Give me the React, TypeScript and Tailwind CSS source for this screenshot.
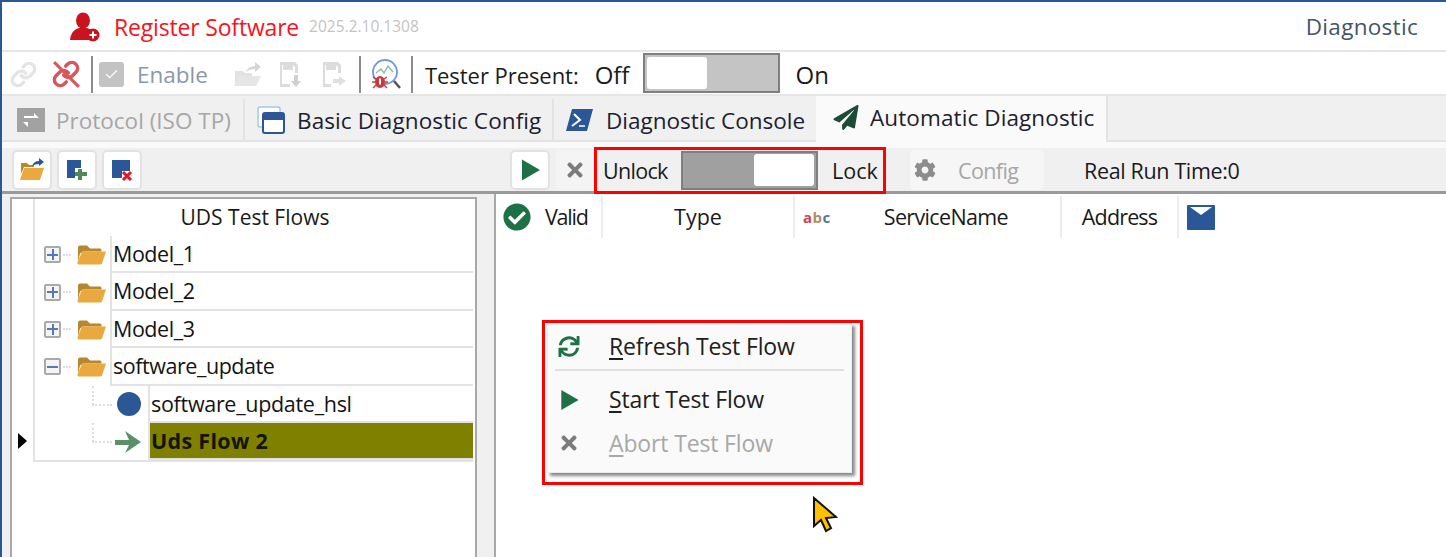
import { Link, Check } from "lucide-react";
import { FaCheckCircle, FaCog, FaPaperPlane, FaSync, FaTimes } from "react-icons/fa";

function FolderIcon({ className = "" }: { className?: string }) {
  return (
    <svg viewBox="0 0 30 20" className={className}>
      <path d="M2 3 Q2 1 4 1 H11 L14 4 H24 Q25.500 4 25.500 6 V7 H7 L4 9 L2 17Z" fill="#b8862f" />
      <path d="M6 7 H30 L26 19 Q25.500 20 24 20 H3 Q1 20 1.500 18Z" fill="#eaa93f" />
    </svg>
  );
}

function PlayIcon({ className = "" }: { className?: string }) {
  return (
    <svg viewBox="0 0 20 22" className={className}>
      <path d="M1 0 L20 11 L1 22Z" fill="#1e7145" />
    </svg>
  );
}

function Expander({ open = false }: { open?: boolean }) {
  return (
    <div className="relative flex h-[17px] w-[17px] items-center justify-center rounded-[2px] border-2 border-[#a9a9a9] bg-[#f4f4f4]">
      <div className="h-[2px] w-[11px] bg-[#5a78b8]" />
      {!open && <div className="absolute h-[11px] w-[2px] bg-[#5a78b8]" />}
    </div>
  );
}

function FolderRow({ label, open = false }: { label: string; open?: boolean }) {
  return (
    <div className="flex h-[37.400px] items-stretch">
      <div className="relative flex w-[75px] shrink-0 items-center pl-[9px]">
        <Expander open={open} />
        <div className="ml-[2px] w-[8px] border-t-2 border-dotted border-[#dddddd]" />
        <FolderIcon className="ml-[5px] h-[21px] w-[30px]" />
      </div>
      <div className="flex flex-1 items-center border-b-2 border-l-2 border-[#e3e3e3] pl-[1px] text-[21.500px] leading-none tracking-[-0.45px] text-[#141414]">
        {label}
      </div>
    </div>
  );
}

function ChildRow({ label, selected = false, icon }: { label: string; selected?: boolean; icon: React.ReactNode }) {
  return (
    <div className="flex h-[37.400px] items-stretch">
      <div className="relative flex w-[113px] shrink-0 items-center justify-end pr-[7px]">
        <div className="absolute left-[57px] top-0 h-[19px] border-l-2 border-dotted border-[#dddddd]" />
        <div className="absolute left-[57px] top-[18px] w-[20px] border-t-2 border-dotted border-[#dddddd]" />
        {icon}
      </div>
      <div
        className={`flex flex-1 items-center border-b-2 border-l-2 border-[#e3e3e3] pl-[1px] text-[21.500px] leading-none ${
          selected ? "bg-[#808000] font-bold tracking-[0.3px] text-[#141400]" : "tracking-[-0.3px] text-[#141414]"
        }`}
      >
        {label}
      </div>
    </div>
  );
}

function HeaderCell({ width, children, center = true }: { width: string; children: React.ReactNode; center?: boolean }) {
  return (
    <div
      className={`flex h-[42px] items-center border-r-2 border-[#ececec] text-[21.500px] leading-none text-[#1a1a1a] ${width} ${
        center ? "justify-center" : ""
      }`}
    >
      {children}
    </div>
  );
}

function MenuItem({ icon, first, rest, disabled = false, height }: { icon: React.ReactNode; first: string; rest: string; disabled?: boolean; height: string }) {
  return (
    <div className={`flex items-center ${height}`}>
      <div className="flex w-[61px] shrink-0 justify-center pr-[19px]">{icon}</div>
      <span className={`text-[23px] leading-none tracking-[-0.15px] ${disabled ? "text-[#a8a8a8]" : "text-[#202020]"}`}>
        <span className="underline underline-offset-[3px]">{first}</span>
        {rest}
      </span>
    </div>
  );
}

export default function App() {
  return (
    <div className="relative h-[557px] w-[1446px] overflow-hidden border-l-2 border-t-2 border-[#2b5797] bg-white font-['Open_Sans',sans-serif]">
      {/* title bar */}
      <div className="flex h-[50px] items-center border-b-2 border-[#e6e6e6] pl-[68px] pr-[28px] pt-[2px]">
        <svg viewBox="0 0 30 30" className="h-[30px] w-[30px] shrink-0">
          <ellipse cx="13" cy="8.500" rx="7" ry="8" fill="#c8141e" />
          <path d="M0 28 Q1 18 9 16 H17 Q21 17 22 19 Q17 23 19 28Z" fill="#c8141e" />
          <circle cx="23" cy="23" r="6.500" fill="#c8141e" />
          <path d="M19.500 23 H26.500 M23 19.500 V26.500" stroke="#fff" strokeWidth="2" />
        </svg>
        <span className="ml-[14px] text-[23px] leading-none tracking-[-0.18px] text-[#f5141e]">Register Software</span>
        <span className="ml-[10px] text-[15.500px] leading-none text-[#c4c4c4]">2025.2.10.1308</span>
        <span className="ml-auto text-[22.500px] leading-none tracking-[0.3px] text-[#44546a]">Diagnostic</span>
      </div>

      {/* device toolbar */}
      <div className="flex h-[44px] items-center border-b-2 border-[#e6e6e6] pl-[8px] pt-[2px]">
        <Link className="h-[27px] w-[27px] text-[#e4e4e4]" strokeWidth={3} />
        <div className="relative ml-[15px] h-[28px] w-[28px]">
          <Link className="h-[28px] w-[28px] text-[#d8555c]" strokeWidth={3} />
          <div className="absolute left-[13px] top-[-3px] h-[35px] w-[3px] -rotate-45 bg-[#d8555c]" />
        </div>
        <div className="ml-[11px] h-[37px] w-[2px] bg-[#8c8c8c]" />
        <div className="ml-[6px] flex h-[25px] w-[25px] items-center justify-center rounded-[3px] bg-[#c3c3c3]">
          <Check className="h-[15px] w-[15px] text-white" strokeWidth={2} />
        </div>
        <span className="ml-[13px] w-[72px] pt-[2px] text-[22.500px] leading-none text-[#8a98a8]">Enable</span>
        <svg viewBox="0 0 30 26" className="ml-[23px] h-[26px] w-[30px]">
          <path d="M3 10 H11 L13 12 H20 V15 H8 L3 24Z" fill="#e2e2e2" />
          <path d="M8 15 H29 L24 25 H2Z" fill="#e6e6e6" />
          <path d="M14 11 Q16 5 23 5 V1 L29 6 L23 11 V8 Q17 8 14 11Z" fill="#d6d6d6" />
        </svg>
        <svg viewBox="0 0 24 28" className="ml-[16px] h-[28px] w-[24px]">
          <path d="M2 2 H17 L20 5 V13 H17 V7 L15 5 V10 H5 V5 H4 V24 H12 V27 H2Z" fill="#dcdcdc" />
          <path d="M8 5 H12 V8 H8Z" fill="#dcdcdc" />
          <path d="M16 15 H20 V21 H23 L18 27 L13 21 H16Z" fill="#d0d0d0" />
        </svg>
        <svg viewBox="0 0 26 28" className="ml-[19px] h-[28px] w-[26px]">
          <path d="M2 2 H17 L20 5 V13 H17 V7 L15 5 V10 H5 V5 H4 V24 H10 V27 H2Z" fill="#dcdcdc" />
          <path d="M8 5 H12 V8 H8Z" fill="#dcdcdc" />
          <path d="M12 19 H18 V16 L25 21 L18 26 V23 H12Z" fill="#e0e0e0" />
        </svg>
        <div className="ml-[12px] h-[37px] w-[2px] bg-[#8c8c8c]" />
        <svg viewBox="0 0 32 32" className="ml-[9px] h-[32px] w-[32px]">
          <circle cx="15" cy="14" r="12" fill="none" stroke="#6f9bd0" strokeWidth="1.800" />
          <path d="M24 23 L30 30" stroke="#555" strokeWidth="2.500" />
          <path d="M6 15 L11 11 L14 15 L18 8 L23 14" fill="none" stroke="#8cc09a" strokeWidth="1.500" />
          <ellipse cx="10" cy="24" rx="5" ry="6" fill="#cc3540" />
          <path d="M3 19 L6 21 M17 19 L14 21 M2 24 H5 M18 24 H15 M3 30 L6 27 M17 30 L14 27" stroke="#cc3540" strokeWidth="1.400" />
          <rect x="9" y="20.500" width="2" height="6" fill="#fff" />
        </svg>
        <div className="ml-[9px] h-[37px] w-[2px] bg-[#8c8c8c]" />
        <span className="ml-[12px] pt-[2px] text-[22px] leading-none tracking-[-0.05px] text-[#1a1a1a]">Tester Present:</span>
        <span className="ml-[16px] pt-[2px] text-[24px] leading-none text-[#1a1a1a]">Off</span>
        <div className="mb-[2px] ml-[14px] flex h-[40px] w-[137px] items-center border-2 border-[#7f7f7f] bg-[#c4c4c4] pl-[2px]">
          <div className="h-[32px] w-[60px] rounded-[3px] bg-white" />
        </div>
        <span className="ml-[15px] pt-[2px] text-[24px] leading-none text-[#1a1a1a]">On</span>
      </div>

      {/* tabs */}
      <div className="flex h-[46px] items-end border-b-2 border-[#e3e3e3] bg-[#f0f0f0] pl-[3px]">
        <div className="flex h-[41px] w-[240px] items-center gap-[11px] border-r-2 border-[#e3e3e3] pl-[12px]">
          <svg viewBox="0 0 28 24" className="h-[24px] w-[28px]">
            <rect width="28" height="24" fill="#a2a2a2" />
            <path d="M7 8 H17 V5 L22 10 H7Z M21 14 H11 V19 L6 14Z" fill="#fff" />
          </svg>
          <span className="pt-[4px] text-[22.500px] leading-none text-[#a6a6a6]">Protocol (ISO TP)</span>
        </div>
        <div className="flex h-[41px] w-[309px] items-center gap-[12px] border-r-2 border-[#e3e3e3] pl-[12px]">
          <svg viewBox="0 0 28 28" className="h-[28px] w-[28px]">
            <rect x="1" y="1" width="22" height="20" rx="2" fill="#fff" stroke="#a8c6ea" strokeWidth="1.500" />
            <rect x="6" y="7" width="21" height="20" rx="2" fill="#fff" stroke="#2b5797" strokeWidth="2" />
            <rect x="6" y="7" width="21" height="7" fill="#2b5797" />
          </svg>
          <span className="pt-[4px] text-[22.500px] leading-none tracking-[0.1px] text-[#1c2030]">Basic Diagnostic Config</span>
        </div>
        <div className="flex h-[41px] w-[262px] items-center gap-[13px] pl-[12px]">
          <svg viewBox="0 0 27 22" className="h-[22px] w-[27px]">
            <path d="M6 0 H27 L21 22 H0Z" fill="#2b5797" />
            <path d="M8 5 L14 11 L6 17" fill="none" stroke="#fff" strokeWidth="2" />
            <path d="M13 17 H19" stroke="#fff" strokeWidth="1.500" />
          </svg>
          <span className="pt-[4px] text-[22.500px] leading-none text-[#1c2030]">Diagnostic Console</span>
        </div>
        <div className="mb-[-2px] flex h-[46px] w-[292px] items-center gap-[11px] border-r-2 border-[#e3e3e3] bg-[#fafafa] pb-[3px] pl-[17px]">
          <FaPaperPlane className="h-[25px] w-[26px] text-[#1c4c38]" />
          <span className="pt-[2px] text-[22.500px] leading-none tracking-[0.1px] text-[#1c2030]">Automatic Diagnostic</span>
        </div>
      </div>

      {/* strip under the tabs */}
      <div className="h-[6px] bg-[#fafafa]" />

      {/* action bar */}
      <div className="flex h-[46px] items-center border-b-[3px] border-[#9a9a9a] bg-[#f0f0f0]">
        <div className="flex w-[508px] shrink-0 items-center gap-[5px] pl-[10px]">
          <div className="flex h-[40px] w-[40px] items-center justify-center rounded-[5px] border-2 border-[#e2e2e2] bg-white">
            <svg viewBox="0 0 26 24" className="h-[24px] w-[26px]">
              <path d="M2 5 H8 L10 7 H15 V9 H5 L2 16Z" fill="#b8862f" />
              <path d="M5 10 H25 L21 22 H1Z" fill="#eaa93f" />
              <path d="M13 8 Q15 3 20 3 V0 L25 4 L20 8 V6 Q16 6 13 8Z" fill="#2b5797" />
            </svg>
          </div>
          <div className="flex h-[40px] w-[40px] items-center justify-center rounded-[5px] border-2 border-[#e2e2e2] bg-white">
            <svg viewBox="0 0 22 22" className="h-[22px] w-[22px]">
              <path d="M1 1 H15 V9 H9 V19 H1Z" fill="#2b5797" />
              <path d="M12 10 H16 V13 H21 V17 H16 V21 H12 V17 H9 V13 H12Z" fill="#4d8a57" />
            </svg>
          </div>
          <div className="flex h-[40px] w-[40px] items-center justify-center rounded-[5px] border-2 border-[#e2e2e2] bg-white">
            <svg viewBox="0 0 22 22" className="h-[22px] w-[22px]">
              <path d="M1 1 H19 V12 H11 V19 H1Z" fill="#2b5797" />
              <path d="M12 13 L20 21 M20 13 L12 21" stroke="#e0162b" strokeWidth="3" />
            </svg>
          </div>
        </div>
        <div className="flex h-[40px] w-[40px] items-center justify-center rounded-[5px] border-2 border-[#e2e2e2] bg-white">
          <PlayIcon className="h-[22px] w-[19px]" />
        </div>
        <div className="ml-[6px] flex h-[40px] w-[38px] items-center justify-center rounded-[5px] bg-[#f4f4f4]">
          <FaTimes className="h-[22px] w-[20px] text-[#7c7c7c]" />
        </div>
        <div className="mb-[-1px] flex h-[47px] w-[292px] shrink-0 items-center border-[3px] border-[#ff0000] pl-[6px]">
          <span className="w-[78px] pt-[2px] text-[21.500px] leading-none tracking-[-0.7px] text-[#1a1a1a]">Unlock</span>
          <div className="flex h-[39px] w-[137px] items-center justify-end border-2 border-[#7f7f7f] bg-[#a0a0a0] pr-[2px]">
            <div className="h-[32px] w-[60px] rounded-[3px] bg-white" />
          </div>
          <span className="ml-[14px] pt-[2px] text-[21.500px] leading-none text-[#1a1a1a]">Lock</span>
        </div>
        <div className="ml-[24px] flex h-[40px] w-[134px] items-center rounded-[5px] bg-[#f6f6f6] pl-[4px]">
          <FaCog className="h-[22px] w-[22px] text-[#8c8c8c]" />
          <span className="ml-[22px] pt-[2px] text-[21.500px] leading-none tracking-[-0.6px] text-[#a6a6a6]">Config</span>
        </div>
        <span className="ml-[40px] pt-[2px] text-[21.500px] leading-none tracking-[-0.35px] text-[#1a1a1a]">Real Run Time:0</span>
      </div>

      {/* split view */}
      <div className="flex h-[365px] bg-[#f0f0f0]">
        <div className="ml-[8px] mt-[3px] flex h-full w-[467px] shrink-0 border-2 border-b-0 border-[#a8a8a8] bg-white">
          <div className="relative w-[21px] shrink-0">
            <div className="absolute left-[6px] top-[234px] h-0 w-0 border-y-[8px] border-l-[9px] border-y-transparent border-l-black" />
          </div>
          <div className="flex-1 pr-[2px]">
            <div className="flex h-[37px] items-center justify-center border-l-2 border-[#e3e3e3] pl-[2px] text-[21px] leading-none text-[#1a1a1a]">
              UDS Test Flows
            </div>
            <div className="border-b-2 border-l-2 border-[#e3e3e3]">
              <FolderRow label="Model_1" />
              <FolderRow label="Model_2" />
              <FolderRow label="Model_3" />
              <FolderRow label="software_update" open />
              <ChildRow
                label="software_update_hsl"
                icon={<div className="h-[24px] w-[24px] rounded-full bg-[#2b5797]" />}
              />
              <ChildRow
                label="Uds Flow 2"
                selected
                icon={
                  <svg viewBox="0 0 26 22" className="h-[22px] w-[26px]">
                    <path d="M0 9 H14 L10 0 L26 11 L10 22 L14 14 H0Z" fill="#5a8f68" />
                  </svg>
                }
              />
            </div>
          </div>
        </div>
        <div className="w-[17px] shrink-0" />
        <div className="flex-1 border-l-2 border-[#a8a8a8] bg-white pt-[2px]">
          <div className="flex h-[42px] items-center">
            <HeaderCell width="w-[107px]" center={false}>
              <div className="flex items-center gap-[14px] pl-[7px]">
                <FaCheckCircle className="h-[28px] w-[28px] text-[#1e7145]" />
                <span className="tracking-[-1.2px]">Valid</span>
              </div>
            </HeaderCell>
            <HeaderCell width="w-[192px]">Type</HeaderCell>
            <HeaderCell width="w-[267px]">
              <div className="flex w-full items-center pl-[8px]">
                <span className="text-[15px] font-bold tracking-[0.5px]">
                  <span className="text-[#cc4455]">a</span>
                  <span className="text-[#b09060]">b</span>
                  <span className="text-[#4a78a8]">c</span>
                </span>
                <span className="ml-[53px] tracking-[-0.65px]">ServiceName</span>
              </div>
            </HeaderCell>
            <HeaderCell width="w-[117px]">
              <span className="tracking-[-0.85px]">Address</span>
            </HeaderCell>
            <svg viewBox="0 0 28 25" className="ml-[8px] h-[25px] w-[28px]">
              <rect width="28" height="25" rx="1" fill="#2b5797" />
              <path d="M3 2 H25 L14 10Z" fill="#fff" />
            </svg>
          </div>
        </div>
      </div>

      {/* context menu with its red marker */}
      <div className="absolute left-[540px] top-[318px] h-[165px] w-[321px] border-[3px] border-[#ff0000] bg-white pl-[2px]">
        <div className="h-[150px] w-[305px] border border-[#ececec] bg-[#fafafa] shadow-[3px_3px_3px_#8a8a8a]">
          <MenuItem
            height="h-[45px]"
            first="R"
            rest="efresh Test Flow"
            icon={<FaSync className="h-[21px] w-[22px] text-[#1e7145]" />}
          />
          <div className="mx-[7px] h-[2px] bg-[#e0e0e0]" />
          <MenuItem
            height="h-[57px]"
            first="S"
            rest="tart Test Flow"
            icon={<PlayIcon className="h-[20px] w-[19px]" />}
          />
          <MenuItem
            height="h-[30px]"
            first="A"
            rest="bort Test Flow"
            disabled
            icon={<FaTimes className="h-[22px] w-[20px] text-[#7c7c7c]" />}
          />
        </div>
      </div>

      {/* mouse cursor */}
      <svg viewBox="0 0 26 38" className="absolute left-[810px] top-[494px] h-[38px] w-[26px]">
        <path d="M2 2 V30 L9 24 L14 35 L19 32 L14 22 L24 21Z" fill="#ffc000" stroke="#111" strokeWidth="2" />
      </svg>
    </div>
  );
}
